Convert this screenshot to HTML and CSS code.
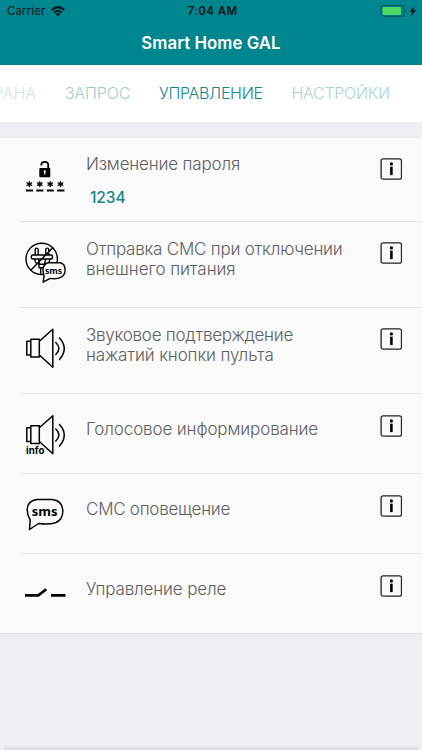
FILE: index.html
```html
<!DOCTYPE html>
<html lang="ru">
<head>
<meta charset="utf-8">
<title>Smart Home GAL</title>
<link rel="stylesheet" href="styles.css">
</head>
<body>
<svg class="defs" width="0" height="0" aria-hidden="true">
  <defs>
    <g id="speaker" fill="none" stroke="#000" stroke-width="1.5" stroke-linejoin="round">
      <path d="M6.8 9.3H15.3V27H6.8ZM6.8 11.3H2.8V25H6.8M15.3 11.3L28.8-.7V37.2L15.3 25"/>
      <path d="M31.8 12.5Q38 18.5 31.8 24.5M35.5 8Q45 18.5 35.5 29.5" stroke-linecap="round"/>
    </g>
    <g id="info">
      <rect x="1.1" y=".8" width="20.4" height="20.4" rx="2" fill="none" stroke="#222" stroke-width="1.3"/>
      <circle cx="11.4" cy="5.9" r="1.6"/>
      <path d="M10.1 8.6h2.6v8.5h-2.6z"/>
    </g>
  </defs>
</svg>
<header class="header">
  <div class="status">
    <div class="carrier"><span>Carrier</span>
      <svg width="14" height="11" viewBox="0 0 14 11"><g fill="none" stroke="#071719" stroke-width="2"><path d="M.8 4Q7-1.7 13.2 4M3.2 6.5Q7 3.2 10.8 6.5"/></g><path d="M4.7 8Q7 6.2 9.3 8L7 10.4Z" fill="#071719"/></svg>
    </div>
    <div class="time">7:04 AM</div>
    <div class="battery">
      <svg width="38" height="12" viewBox="0 0 38 12"><rect x="1.1" y=".6" width="23" height="10.8" rx="2.5" fill="none" stroke="#055c66" stroke-width="1.2"/><rect x="2.5" y="2" width="18.5" height="8" rx="1" fill="#4cd964"/><path d="M25.6 4q2 2 0 4" fill="#055c66"/><path d="M34.3 .8L29.7 6.8H32.4L31 11.4L36 5H33.2Z" fill="#071719"/></svg>
    </div>
  </div>
  <h1 class="title">Smart Home GAL</h1>
</header>
<nav class="tabs">
  <span class="tab tab-far">ОХРАНА</span><span class="tab tab-near">ЗАПРОС</span><span class="tab tab-active">УПРАВЛЕНИЕ</span><span class="tab tab-next">НАСТРОЙКИ</span>
</nav>
<main class="list">
  <section class="row row-password">
    <svg class="icon" width="42" height="42" viewBox="0 0 42 42"><rect x="15.3" y="9" width="11" height="9.3" rx="1"/><path d="M17.3 6.5V6Q17.3 2.8 20.8 2.8T24.2 6V10" fill="none" stroke="#000" stroke-width="1.8"/><path d="M20.8 11.2a1.2 1.2 0 0 1 .6 2.2v2.1h-1.2v-2.1a1.2 1.2 0 0 1 .6-2.2" fill="#fafafa"/><g stroke="#000" stroke-width="1.3" stroke-linecap="round"><path id="star" d="M5.3 22.6v5M3 23.9l4.6 2.4M7.6 23.9l-4.6 2.4"/><use href="#star" x="10.5"/><use href="#star" x="20.9"/><use href="#star" x="31.2"/></g><path d="M2 31.5H9M12.3 31.5H19.3M22.8 31.5H29.8M33.2 31.5H40.5" stroke="#000" stroke-width="1.8"/></svg>
    <div class="text"><p class="label w1">Изменение пароля</p><p class="value">1234</p></div>
    <svg class="info" width="22" height="22"><use href="#info"/></svg>
  </section>
  <section class="row row-tall">
    <svg class="icon" width="42" height="42" viewBox="0 0 42 42"><g fill="none" stroke="#000" stroke-width="1.4" stroke-linejoin="round"><circle cx="17.7" cy="14.9" r="15.7"/><path d="M11.2 11V5.6q0-1.5 1.5-1.5t1.5 1.5V11M21.8 11V5.6q0-1.5 1.5-1.5t1.5 1.5V11M8.8 11H27q1.5 0 1.5 2T27 15H8.8q-1.5 0-1.5-2t1.5-2M10.5 15q.5 4.5 4.5 5.2h6.5q4-.7 4.5-5.2M14.3 15l1.2 5M21.7 15l-1.2 5M15 20.2v3.6h6.5v-3.6M16.7 24v6.3M19.8 24v6.3M29 3.5L6.5 26.5"/><path transform="translate(.6 -1.8)" d="M23.5 20.5h12q5 1 5 7t-5 8q-3 1.5-10 .7L18.5 40l1-6q-3.5-11 4-13.5Z" fill="#fff"/></g><text class="sms-small" x="21" y="29.7">sms</text></svg>
    <div class="text"><p class="label w2">Отправка СМС при отключении</p><p class="label w3">внешнего питания</p></div>
    <svg class="info" width="22" height="22"><use href="#info"/></svg>
  </section>
  <section class="row row-tall">
    <svg class="icon" width="42" height="42" viewBox="0 0 42 42"><use href="#speaker"/></svg>
    <div class="text"><p class="label w4">Звуковое подтверждение</p><p class="label w5">нажатий кнопки пульта</p></div>
    <svg class="info" width="22" height="22"><use href="#info"/></svg>
  </section>
  <section class="row">
    <svg class="icon" width="42" height="42" viewBox="0 0 42 42"><use href="#speaker" y="3.5"/><text class="info-word" x="2" y="41">info</text></svg>
    <div class="text"><p class="label w6">Голосовое информирование</p></div>
    <svg class="info" width="22" height="22"><use href="#info"/></svg>
  </section>
  <section class="row">
    <svg class="icon" width="42" height="42" viewBox="0 0 42 42"><path d="M13 6.5H28Q38.8 7.5 38.8 18Q38.8 27 31.5 29.7Q25 31.8 14.5 30.5L5.5 36.5L6.2 27Q3 22 3.2 16Q4 7.5 13 6.5Z" fill="none" stroke="#000" stroke-width="1.5" stroke-linejoin="round"/><text class="sms" x="7.7" y="23">sms</text></svg>
    <div class="text"><p class="label w7">СМС оповещение</p></div>
    <svg class="info" width="22" height="22"><use href="#info"/></svg>
  </section>
  <section class="row">
    <svg class="icon" width="42" height="42" viewBox="0 0 42 42"><path d="M1 22.3H14.3L22.3 16.2M27 22.3H41.5" fill="none" stroke="#000" stroke-width="2.7"/></svg>
    <div class="text"><p class="label w8">Управление реле</p></div>
    <svg class="info" width="22" height="22"><use href="#info"/></svg>
  </section>
</main>
<footer class="bottom-shadow"></footer>
</body>
</html>
```
FILE: styles.css
```css
* { box-sizing: border-box; }
body {
  margin: 0;
  height: 750px;
  display: flex;
  flex-direction: column;
  overflow: hidden;
  background: #efeef4;
  font-family: Inter, "Liberation Sans", sans-serif;
}
p, h1 { margin: 0; }
.defs { position: absolute; }
.header { height: 65px; flex: none; background: #00868f; border-bottom: 1px solid #087d85; }
.status {
  height: 22px;
  display: grid;
  grid-template-columns: 1fr auto 1fr;
  align-items: center;
  padding: 0 4px 0 7px;
  color: #071719;
  font-size: 11.5px;
}
.carrier { display: flex; align-items: center; gap: 6px; letter-spacing: .1px; }
.time { font-weight: 600; letter-spacing: .4px; }
.battery { display: flex; justify-content: flex-end; }
.title { text-align: center; color: #fff; font-size: 16.8px; font-weight: 600; line-height: 42px; letter-spacing: .05px; }
.tabs {
  height: 57px;
  flex: none;
  display: flex;
  gap: 28.7px;
  margin-left: -28.5px;
  background: #fff;
  font-size: 16px;
  font-weight: 300;
  line-height: 57px;
  white-space: nowrap;
}
.tab-far { color: #cfe4e6; }
.tab-near { color: #9ccbce; letter-spacing: -.1px; }
.tab-active { color: #16858e; letter-spacing: -.3px; }
.tab-next { color: #aad3d5; letter-spacing: -.28px; }
.list { margin-top: 15px; background: #fafafa; border-top: 1px solid #eaeaed; border-bottom: 1px solid #dfdfe4; }
.row {
  height: 80px;
  display: grid;
  grid-template-columns: 42px 1fr 22px;
  column-gap: 20px;
  align-items: center;
  margin-left: 20px;
  padding: 0 20px 0 4px;
  border-bottom: 1px solid #e3e3e8;
}
.row:last-child { height: 79px; border-bottom: 0; }
.row-password { height: 84px; }
.row-tall { height: 86px; }
.icon { overflow: visible; }
.info { align-self: start; margin-top: 21px; }
.row-password .info, .row-tall .info { margin-top: 20px; }
.label { color: #606064; font-size: 17px; font-weight: 300; line-height: 20.5px; white-space: nowrap; }
.w1 { letter-spacing: -.16px; }
.w2 { letter-spacing: -.22px; }
.w3 { letter-spacing: -.06px; }
.w4 { letter-spacing: -.25px; }
.w5 { letter-spacing: -.13px; }
.w6 { letter-spacing: -.13px; }
.w7 { letter-spacing: -.25px; }
.w8 { letter-spacing: -.15px; }
.text { padding-bottom: 9px; }
.row-tall .text { padding-bottom: 11px; }
.row-password .text { padding: 3px 0 0; }
.value { padding-left: 4px; margin-top: 12px; color: #16858e; font-size: 15.5px; font-weight: 500; line-height: 21px; letter-spacing: -.1px; }
.sms { font: bold 13px "Noto Sans", sans-serif; }
.sms-small { font: bold 8.7px "Noto Sans", sans-serif; }
.info-word { font: bold 9.8px Inter, sans-serif; }
.bottom-shadow { margin: auto 4px 0; height: 5px; background: linear-gradient(#efeef4, #d9d8dd); }
```
